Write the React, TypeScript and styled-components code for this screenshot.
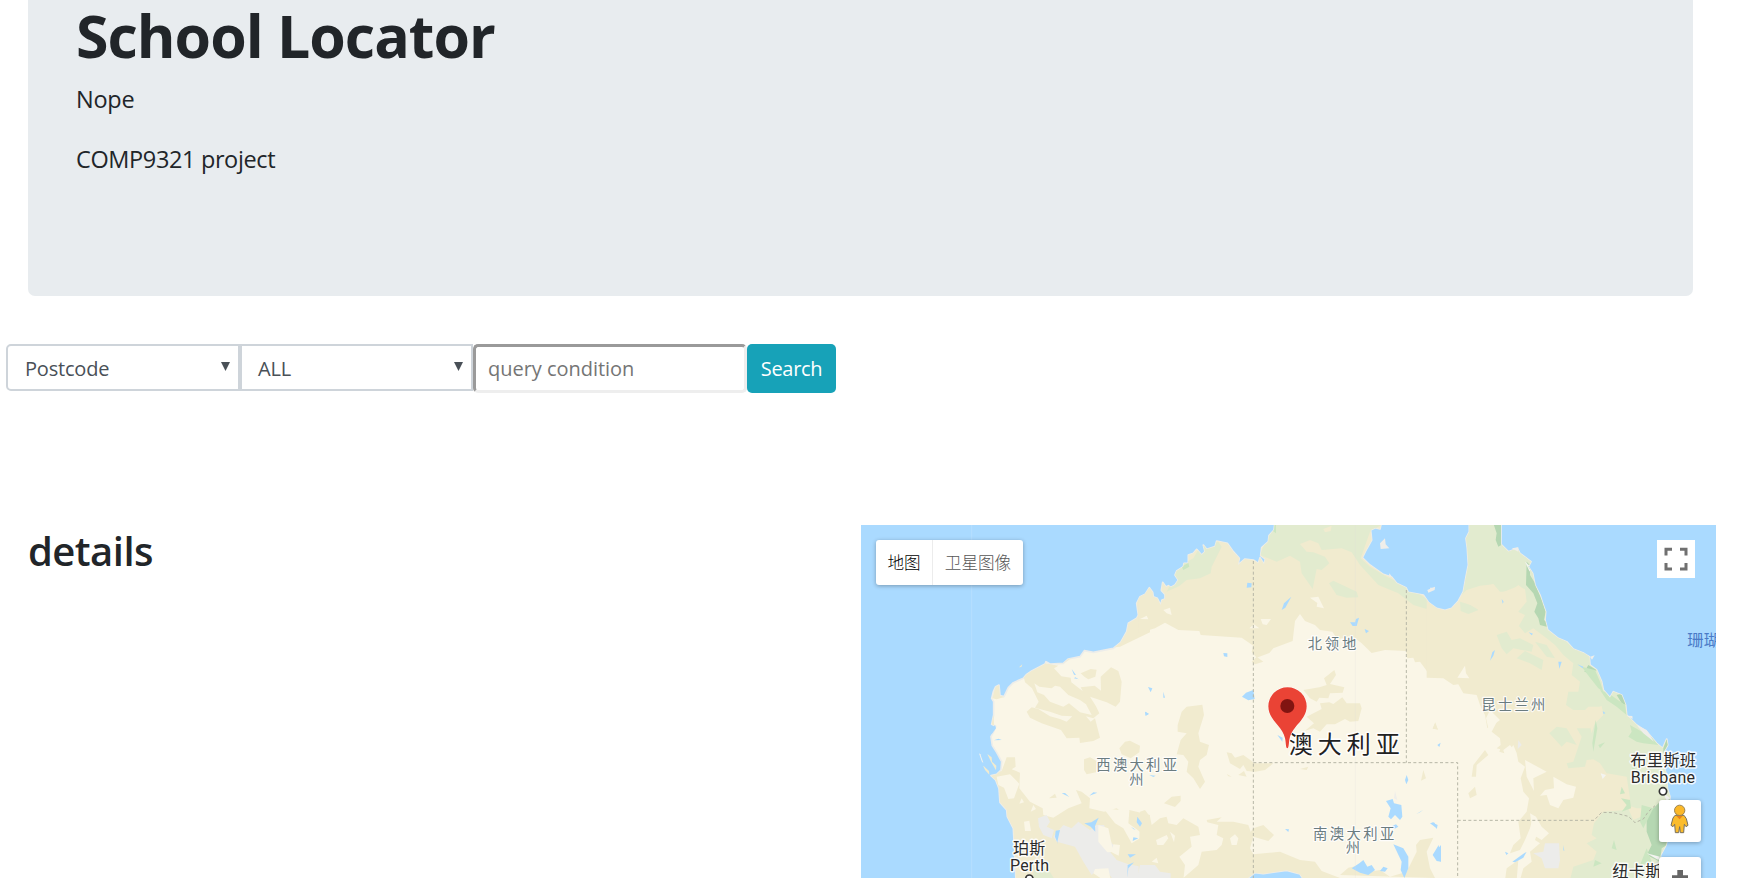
import React from 'react';
import styled, { createGlobalStyle } from 'styled-components';

const GlobalStyle = createGlobalStyle`
  * { box-sizing: border-box; }
  html, body { margin: 0; background: #fff; overflow: hidden; }
  body { font-family: 'Open Sans', 'Noto Sans', 'Noto Sans CJK SC', sans-serif; color: #212529; }
`;

const Page = styled.div`
  display: flex;
  flex-direction: column;
  height: 878px;
  overflow: hidden;
`;

const Jumbotron = styled.header`
  flex: none;
  height: 296px;
  margin: 0 47px 0 28px;
  padding: 1px 48px 0;
  background: #e8ecef;
  border-radius: 0 0 7px 7px;
`;

const Title = styled.h1`
  margin: 0;
  font-size: 59px;
  font-weight: 700;
  line-height: 68px;
  letter-spacing: -1px;
`;

const Lead = styled.p<{ $spacing: number }>`
  margin: 0 0 24px;
  font-size: 23.5px;
  line-height: 36px;
  letter-spacing: ${(p) => p.$spacing}px;
  &:first-of-type { margin-top: 12px; }
`;

const SearchBar = styled.form`
  display: flex;
  flex: none;
  align-items: flex-start;
  height: 181px;
  margin-top: 48px;
  padding-left: 6px;
`;

const SelectBox = styled.div<{ $first?: boolean }>`
  display: flex;
  align-items: center;
  justify-content: space-between;
  width: ${(p) => (p.$first ? 234 : 233)}px;
  height: 47px;
  padding: 1px 8px 0 ${(p) => (p.$first ? 17 : 16)}px;
  border: 2px solid #ced4da;
  border-radius: ${(p) => (p.$first ? '5px 0 0 5px' : '0')};
  color: #495057;
  font-size: 20px;
  letter-spacing: -0.2px;
`;

const Caret = styled.svg`
  width: 9px;
  height: 9px;
  margin-top: -3px;
  fill: #495057;
`;

const QueryInput = styled.input`
  width: 274px;
  height: 49px;
  padding: 0 12px;
  border: 3px solid;
  border-color: #9a9a9a #eee #eee #9a9a9a;
  border-radius: 5px;
  background: #fff;
  font: 20px 'Open Sans', sans-serif;
  letter-spacing: -0.03px;
  outline: none;
  &::placeholder { color: #757575; opacity: 1; }
`;

const SearchButton = styled.button`
  width: 89px;
  height: 49px;
  padding: 0;
  border: 0;
  border-radius: 5px;
  background: #17a2b8;
  color: #fff;
  font: 20px 'Open Sans', sans-serif;
  letter-spacing: -0.3px;
`;

const Content = styled.main`
  display: grid;
  grid-template-columns: 833px 855px;
  height: 353px;
  padding-left: 28px;
`;

const Details = styled.h2`
  margin: 0;
  font-size: 40px;
  font-weight: 600;
  line-height: 52px;
  letter-spacing: -0.55px;
`;

const MapPanel = styled.section`
  position: relative;
  height: 353px;
  overflow: hidden;
  background: #aadaff;
`;

const MapCanvas = styled.svg`
  display: block;
  width: 855px;
  height: 353px;
`;

const MapTypes = styled.div`
  position: absolute;
  left: 15px;
  top: 15px;
  display: flex;
  height: 45px;
  border-radius: 3px;
  background: #fff;
  box-shadow: 0 1px 4px rgba(0, 0, 0, 0.3);
`;

const MapType = styled.div<{ $active?: boolean }>`
  display: flex;
  align-items: center;
  justify-content: center;
  width: ${(p) => (p.$active ? 57 : 90)}px;
  padding-bottom: 2px;
  color: ${(p) => (p.$active ? '#000' : '#565656')};
  font: 300 16.6px 'Noto Sans CJK SC', sans-serif;
  border-right: ${(p) => (p.$active ? '1px solid #ececec' : '0')};
`;

const MapControl = styled.div<{ $top: number; $size: number; $left: number }>`
  position: absolute;
  left: ${(p) => p.$left}px;
  top: ${(p) => p.$top}px;
  width: ${(p) => p.$size}px;
  height: ${(p) => p.$size}px;
  background: #fff;
  border-radius: ${(p) => (p.$size > 40 ? 3 : 0)}px;
  box-shadow: ${(p) => (p.$size > 40 ? '0 1px 4px rgba(0,0,0,.3)' : 'none')};
  svg { display: block; width: 100%; height: 100%; }
`;

const LAND =
  'M498 1100L495 1030 490 940 472 905 470 885 450 862 447 820 437 795 423 782 440 778 453 765 455 740 440 712 427 692 423 665 430 652 437 634 425 628 431 600 431 560 425 550 430 530 437 515 447 510 450 542 462 545 475 518 490 503 520 490 530 478 545 468 585 447 588 440 600 447 640 445 655 432 690 425 703 407 730 412 790 400 812 382 830 350 835 325 860 310 865 300 860 265 870 245 885 238 898 218 908 232 910 245 922 250 932 270 936 255 945 252 945 238 934 226 938 202 948 216 955 212 963 217 975 210 985 195 975 180 980 168 1000 155 1002 145 1015 145 1015 120 1030 115 1040 103 1055 120 1065 110 1060 90 1070 103 1095 95 1100 78 1132 85 1150 110 1168 130 1164 150 1185 132 1210 135 1225 145 1230 128 1242 148 1246 132 1232 122 1235 98 1255 80 1257 62 1272 45 1275 20H1595L1590 42 1576 38 1562 45 1565 75 1550 102 1537 128 1560 150 1600 178 1625 186 1640 205 1668 218 1675 232 1720 240 1735 262 1760 280 1785 286 1805 280 1825 258 1840 230 1848 185 1855 150 1852 100 1848 70 1858 50 1858 20H1953L1953 88 1975 110 2002 100 2010 115 2043 140 2035 155 2048 175 2055 210 2070 240 2078 265 2087 290 2085 315 2093 345 2125 370 2150 380 2170 402 2202 415 2218 425 2220 450 2240 465 2255 500 2260 525 2280 548 2290 530 2315 540 2327 570 2330 600 2360 630 2390 650 2420 685 2438 700 2450 672 2453 690 2442 710 2440 750 2450 780 2452 820 2460 845 2458 870 2460 940 2448 990 2432 1020 2425 1100H1365L1350 1077 1310 1066 1240 1076 1215 1073 1180 1100Z';

const Label = (p: { x: number; y: number; w: number; size: number; color?: string; strong?: boolean; children: string }) => (
  <text
    x={p.x}
    y={p.y}
    textLength={p.w}
    fontSize={p.size}
    fill={p.color || '#6b7c80'}
    stroke={p.color === '#4a7bc8' ? 'none' : '#fff'}
    strokeOpacity={0.85}
    strokeWidth={p.strong ? 9 : 7}
    strokeLinejoin="round"
    paintOrder="stroke"
    fontFamily="Roboto, 'Noto Sans CJK SC', sans-serif"
    fontWeight={400}
  >
    {p.children}
  </text>
);

/* Drawn at three units per pixel; groups hold the west, centre and east thirds. */
const AustraliaMap = () => (
  <MapCanvas viewBox="33 30 2565 1059">
    <defs>
      <clipPath id="land"><path d={LAND} /></clipPath>
    </defs>
    <path d={LAND} fill="#faf6e7" stroke="#ededea" strokeWidth="5" strokeLinejoin="round" />
    <g clipPath="url(#land)">
      {/* west */}
      <g fill="#f1ebcf">
        <path d="M520 480L585 445 625 452 612 460 634 484 662 488 664 502 720 545 700 532 692 517 734 512 753 527 752 485 783 457 805 468 815 500 810 560 797 575 770 562 720 545 738 574 748 595 730 610 708 604 722 620 735 610 750 668 730 678 690 684 688 668 650 670 633 645 575 625 540 608 530 590 545 577 565 582 600 604 630 612 650 620 667 604 635 602 600 590 555 578 566 560 546 520 525 502Z" />
        <path fill="#faf6e7" d="M553 505L568 515 605 520 615 512 630 515 655 540 690 555 708 568 725 600 690 592 657 565 640 575 600 560 582 540 562 532Z" />
        <path d="M692 475L722 462 740 464 736 485 715 493 704 486Z M808 700L825 680 840 677 870 692 868 712 842 730 815 718Z M702 733L720 727 740 738 738 772 710 778 702 765Z M600 445L640 445 703 405 810 395 900 352 900 220 850 220 780 380Z" />
        <path d="M423 780L455 768 470 727 495 727 497 755 485 763 510 773 508 820 540 860 578 880 580 900 610 908 655 880 695 865 678 825 695 830 720 850 718 880 762 890 800 880 835 907 838 885 860 890 900 900V1095H490Z M425 590L431 603 432 630 415 660 410 630Z M427 550L437 512 450 510 450 540 463 546 440 553Z M597 850L615 836 620 848Z" />
        <path fill="#faf6e7" d="M440 785L480 778 508 806 492 850 475 852 462 818 445 810Z M515 850L522 862 508 866Z M550 870L558 882 542 890Z M522 920L538 917 543 948 525 948Z M760 880L838 888 835 925 870 950 890 940 900 985 870 970 845 985 820 940 795 925Z" />
        <path fill="#ececea" d="M564 910L590 900 600 920 590 935 612 945 605 970 580 960 567 935Z M610 965L640 930 665 940 685 920 720 945 740 930 762 930 770 950 785 985 805 1005 780 1010 800 1035 835 1048 900 1060V1095H790L770 1068 740 1065 725 1080 700 1040 675 995 620 980Z" />
        <path fill="#faf6e7" d="M745 930L775 940 790 1010 772 1012 745 980Z M790 988L810 990 806 1022 785 1012Z M735 1062L775 1060 782 1095H760L730 1075Z" />
        <path fill="#e2ebcf" d="M555 1055L590 1055 615 1095H545Z" />
      </g>
      {/* centre */}
      <g transform="translate(870 0)">
        <path fill="#f1ebcf" d="M-5 355L45 340 75 323 115 345 178 348 182 360 305 368 340 392 335 410 350 428 388 414 400 400 458 378 465 318 480 297 495 318 525 330 540 345 577 350 592 372 640 365 665 385 695 414 735 405 798 408 802 430 820 428 825 442 840 440 862 470 890 490V20H-5Z" />
        <g fill="#f1ebcf">
          <path d="M113 630L125 590 140 575 187 569 192 600 175 655 180 680 207 690 200 720 180 735 175 755 195 800 180 822 160 790 140 770 145 740 130 720 110 718 122 675 140 655 113 650Z M490 525L538 517 560 510 552 490 583 465 588 480 570 507 613 517 608 533 570 535 565 550 538 548 530 560 510 550Z M500 605L545 582 540 565 568 562 580 567 607 547 620 565 660 565 665 580 655 618 630 620 615 612 585 628 560 628 540 650 520 640 495 647 522 625Z M260 712L275 715 285 728 310 720 335 738 342 745 400 745 375 765 345 770 320 768 310 750 300 762 270 745Z M260 777L275 785 265 784Z M295 780L312 768 320 785Z M335 440L350 425 370 440 345 448Z M480 762L505 755 500 765Z M850 765L858 790 843 797Z M72 865L95 845 122 842 122 858 105 876Z M885 625L893 642 878 642Z" />
          <path d="M0 890L15 885 30 905 35 930 60 910 80 905 85 925 110 930 130 910 175 935 180 960 150 965 155 995 118 1025 135 1050 130 1095H-5Z M200 915L245 907 230 920 280 920 325 930 332 950 340 940 370 930 402 960 385 978 340 965 330 1000 340 1018 420 1010 480 1035 525 1040 545 1068 600 1089H130L175 1050 185 1010 230 1005 245 990 250 970 230 960 235 930 202 922Z M600 1080L625 1058 665 1050 690 1070 720 1065 750 1085 800 1070 830 1010 828 990 840 975 880 968 860 1010 870 1060 885 1089Z" />
          <path fill="#faf6e7" d="M48 975L80 960 85 970 70 990 52 990Z M90 950L105 962 102 982Z M270 970L285 958 295 970 290 990 275 990Z M35 1040L50 1028 55 1045Z" />
          <path fill="#ececea" d="M0 1050L45 1050 60 1070 92 1075V1095H-10Z" />
        </g>
        <path fill="#faf6e7" d="M70 285L90 278 95 300 80 295Z M0 312L20 302 25 313Z M510 248L535 245 552 280 530 275 532 264Z M362 312L393 312 380 330 368 328Z M328 340L342 328 358 340Z" />
        <path fill="#e2ebcf" d="M90 210L105 160 160 130 180 95 235 80 245 95 215 155 212 175 180 190 140 195 118 213 80 230Z M360 120L400 20H740L690 50 662 130 690 155 740 185 800 212 865 255 860 282 820 270 775 235 715 210 660 150 635 112 605 100 545 105 535 85 510 75 480 87 500 110 520 112 555 125 568 145 545 165 530 162 518 222 485 175 480 140 450 122 410 140Z M567 205L580 197 650 230 655 247 620 248 590 240Z" />
        <path fill="#cbe6c1" d="M400 30H408V55L395 45Z M125 155L145 143 148 155 130 165Z" />
        <path fill="#f1ebcf" d="M550 42L575 32 572 48 555 52Z" />
      </g>
      {/* east */}
      <g transform="translate(1740 0)">
        <path fill="#f1ebcf" d="M-10 488L40 490 70 510 85 508 100 535 140 540 150 570 165 600 172 640 188 625 205 612 185 650 210 670 212 690 200 700 220 705 240 690 260 715 265 740 285 755 272 790 280 830 297 850 290 890 265 920 272 970 250 990 240 1015 270 1005 285 975 300 940 305 920 325 945 315 975 330 985 300 1010 305 1040 280 1060 270 1095H750V20H-10Z" />
        <path fill="#faf6e7" d="M82 488L105 452 108 475 118 490Z M180 585L210 615 190 630 175 640 168 610Z M285 735L350 770 310 790 312 828 290 785Z M370 785L410 808 438 815 430 848 400 855 385 880 360 870 350 840 330 842 345 825 372 820Z M300 895L318 905 335 935 357 955 335 975 310 960Z M250 690L260 715 240 705Z" />
        <path fill="#f1ebcf" d="M115 835L135 815 140 840 120 850Z M130 750L165 705 175 720 140 750 138 785 125 785Z M8 640L16 622 24 645Z M215 690L223 715 208 710Z M230 1060L265 1035 260 1095H225Z" />
        <path fill="#ececea" d="M310 1015L340 1010 345 985 387 985 390 1035 385 1060 345 1060 335 1030Z M265 675L275 690 263 702Z" />
        <path fill="#e2ebcf" d="M80 255L110 225 150 212 190 208 210 235 235 225 260 215 285 222 290 260 265 290 280 305 260 325 285 355 310 340 350 370 375 390 400 420 430 445 425 480 450 500 445 530 415 530 408 570 430 585 465 585 475 575 515 575 520 600 480 640 440 640 455 665 430 740 410 745 415 760 465 755 470 735 490 733 510 745 530 775 590 785 600 850 590 885 520 890 492 925 485 960 500 970 470 985 500 1010 490 1035 430 1055 420 1095H750V20H100Z" />
        <path fill="#e2ebcf" d="M90 260L140 275 145 285 115 297 92 288Z M200 360L230 350 245 375 270 370 310 390 305 410 250 400 230 418 215 400Z M260 430L285 408 340 435 335 465 300 445Z M315 380L350 390 375 430 350 425Z M358 655L380 635 410 640 440 690 410 680 395 695Z" />
        <path fill="#f1ebcf" d="M105 260L125 225 190 207 210 230 240 230 265 210 285 225 280 260 240 260 240 280 285 300 260 345 210 345 185 320 155 290Z M470 590L515 573 520 600 497 615 485 655 478 625Z M535 785L555 780 562 795 550 804Z M590 870L620 880 650 880 645 900 610 915Z" />
        <g fill="#b5d7b2">
          <path d="M190 25H214V90L205 95 197 75 200 55Z M290 140L300 150 300 180 315 205 328 238 338 260 347 290 342 315 355 325 350 335 330 330 325 310 313 290 322 265 310 235 288 210Z M463 470L475 450 500 465 480 475Z M560 540L580 535 587 570 575 565Z M700 700L710 672 715 690 700 715Z M650 900L690 860 720 850V985L695 1000 690 1040 650 1020 665 990 650 950Z" />
        </g>
        <g fill="#cbe6c1">
          <path d="M455 455L495 465 510 500 520 530 505 520 480 488Z M510 525L535 535 585 570 590 600 560 575 530 555Z M600 630L670 670 685 690 640 685 620 680 595 665 605 650Z M497 615L502 640 490 710 487 685Z M573 850L600 855 603 880 575 890 590 870Z M505 690L525 682 510 700Z M625 720L635 750 605 765Z M552 975L560 1005 545 1000Z M495 1035L515 1045 490 1055Z M575 815L585 835 570 838Z M635 870L670 880 640 940 630 920Z M630 1050L650 1000 665 1040Z" />
        </g>
        <path fill="#f4f4f1" d="M285 140L302 155 299 170Z M512 775L528 780 518 792Z M650 1015L690 1025 685 1035Z M700 835L722 850 710 857Z" />
      </g>
    </g>

    {/* lakes, inlets and small islands */}
    <g fill="#aadaff">
      <path d="M435 630L438 640 425 658 418 650Z M432 676L445 671 455 675Z M665 462L678 480 672 479Z M672 490L686 493 676 487Z M635 835L645 834 658 846Z M718 842L730 832 742 833Z M703 925L724 922 746 908 735 933 736 950 722 935Z M617 947L630 945 622 980 624 988 615 965Z M843 935L858 945 850 942Z M862 905L876 925 870 935 860 922Z M850 967L865 970 848 978Z M833 1018L858 1018 840 1028Z M833 1050L852 1042 835 1060 832 1088Z M886 590L897 597 887 602Z" />
      <path d="M400 752L410 765 402 758Z" fill="#f1ebcf" />
      <path d="M387 715L391 718 400 743 396 741Z" fill="#f3f3ef" />
      <path d="M412 717L425 727 426 740 439 752 438 766 423 740Z M400 752L417 768 418 779 405 765Z M507 457L517 448 514 456Z" fill="#f1ebcf" />
      <g transform="translate(870 0)">
        <path d="M322 203L335 205 334 217 320 218Z M425 285L432 265 454 245 436 278Z M630 322L645 322 648 312 657 308 650 333 638 333Z M674 342L687 348 678 355Z M250 414L262 415 262 426 252 424Z M306 545L318 533 340 525 344 552 325 556Z M24 516L37 520 32 532Z M70 530L75 548 70 548Z M15 590L26 596 17 602Z M412 660L428 668 427 680Z M28 780L47 782 40 786Z M738 858L758 852 762 865 784 870 787 905 780 915 765 900 753 913 745 905 752 880Z M795 795L800 780 805 795 799 808Z M828 898L850 884 840 892Z M435 942L447 943 445 951Z M755 934L768 928 775 935 763 942Z M760 988L790 1000 805 1025 805 1060 793 1089 782 1065 785 1040Z M875 922L893 930 890 942Z M880 1018L903 990V1040Z M635 1060L658 1045 670 1035 682 1055 695 1050 705 1065 685 1080 660 1073Z M730 1055L743 1060 735 1070 720 1068Z" />
        <path d="M720 85L735 70 737 88 748 100 722 102Z M748 175L755 184 747 185Z M862 225L885 215 884 225 865 233Z M765 828L772 855 762 850Z" fill="#efeeea" />
      </g>
      <g transform="translate(1740 0)">
        <path d="M215 252L221 260 218 266Z M180 437L187 412 195 405 190 422Z M296 352L309 356 305 361Z M385 440L395 440 388 462Z M442 448L460 455 458 460Z M0 925L12 922 22 937 15 936Z M8 1020L26 990 33 1040 20 1038Z M247 1040L275 1020 290 1010 280 1028 255 1042Z M22 690L32 683 28 696Z M225 1010L235 1015 229 1020Z M400 990L403 1008 400 1006Z M518 588L526 594 521 598Z" />
        <path d="M0 218L15 218 2 228Z M245 100L265 97 265 110Z M480 425L494 421 486 434Z M590 602L607 603 608 612Z M620 630L650 645 672 680 640 655Z" fill="#efeeea" />
      </g>
    </g>

    <g fill="none" stroke="#b6b6a6" strokeWidth="3" strokeDasharray="9 7">
      <path d="M1210 138V1089M1210 743H1823V1089M1669 225V743M1823 916H2232L2255 892 2290 893 2335 904 2355 923 2380 912 2395 890 2415 872" />
    </g>
    <path d="M365 30V1089" stroke="#fff" strokeOpacity=".15" strokeWidth="3" />
    <path d="M1516 30V1089" stroke="#ddd" strokeOpacity=".22" strokeWidth="3" />

    <Label x={739} y={766} w={242} size={43}>西澳大利亚</Label>
    <Label x={838} y={811} w={43} size={43}>州</Label>
    <Label x={1373} y={401} w={146} size={43}>北领地</Label>
    <Label x={1389} y={971} w={244} size={43}>南澳大利亚</Label>
    <Label x={1487} y={1015} w={43} size={43}>州</Label>
    <Label x={1894} y={584} w={192} size={43}>昆士兰州</Label>
    <Label x={2512} y={394} w={98} size={49} color="#4a7bc8">珊瑚</Label>
    <Label x={489} y={1017} w={97} size={48} color="#2b2b2b" strong>珀斯</Label>
    <Label x={480} y={1067} w={117} size={48} color="#2b2b2b" strong>Perth</Label>
    <Label x={2341} y={754} w={197} size={49} color="#2b2b2b" strong>布里斯班</Label>
    <Label x={2342} y={803} w={193} size={48} color="#2b2b2b" strong>Brisbane</Label>
    <Label x={2287} y={1086} w={197} size={49} color="#2b2b2b" strong>纽卡斯尔</Label>
    <Label x={1316} y={714} w={333} size={72} color="#222" strong>澳大利亚</Label>
    <g fill="#fff" stroke="#333" strokeWidth="5">
      <circle cx="538" cy="1091" r="11" />
      <circle cx="2439" cy="829" r="11" />
    </g>

    <path d="M1312 700C1307 700 1308 682 1305 670C1297 631 1255 616 1255 574A57 57 0 0 1 1370 574C1370 616 1328 631 1319 670C1316 682 1317 700 1312 700Z" fill="#ea4335" stroke="#fff" strokeWidth="3" paintOrder="stroke" />
    <circle cx="1312" cy="573" r="21" fill="#811411" />
  </MapCanvas>
);

export default function App() {
  return (
    <>
      <GlobalStyle />
      <Page>
        <Jumbotron>
          <Title>School Locator</Title>
          <Lead $spacing={-0.25}>Nope</Lead>
          <Lead $spacing={-0.37}>COMP9321 project</Lead>
        </Jumbotron>
        <SearchBar>
          <SelectBox $first>
            Postcode
            <Caret viewBox="0 0 9 9"><path d="M0 0H9L4.5 9Z" /></Caret>
          </SelectBox>
          <SelectBox>
            ALL
            <Caret viewBox="0 0 9 9"><path d="M0 0H9L4.5 9Z" /></Caret>
          </SelectBox>
          <QueryInput placeholder="query condition" />
          <SearchButton type="button">Search</SearchButton>
        </SearchBar>
        <Content>
          <Details>details</Details>
          <MapPanel>
            <AustraliaMap />
            <MapTypes>
              <MapType $active>地图</MapType>
              <MapType>卫星图像</MapType>
            </MapTypes>
            <MapControl $left={796} $top={15} $size={38}>
              <svg viewBox="0 0 38 38" fill="none" stroke="#707070" strokeWidth="3">
                <path d="M9 15.5V9.2H15M23 9.2H29V15.5M29 23V29H23M15 29H9V23" />
              </svg>
            </MapControl>
            <MapControl $left={798} $top={275} $size={42}>
              <svg viewBox="0 0 126 126">
                <path d="M48 46H75L82 56 87 76 81 80 76 73 74 98H64L62 80 59 98H49L47 73 42 80 36 76 42 54Z" fill="#fbbc2c" stroke="#77705f" strokeWidth="3" strokeLinejoin="round" />
                <path d="M52 48H71L62 58Z" fill="#e8811a" />
                <circle cx="62" cy="31" r="15.5" fill="#fbb829" stroke="#9b8350" strokeWidth="3" />
              </svg>
            </MapControl>
            <MapControl $left={798} $top={332} $size={42}>
              <svg viewBox="0 0 42 42" fill="#666">
                <path d="M18.3 13H24V18.3H29V24H24V29H18.3V24H13V18.3H18.3Z" />
              </svg>
            </MapControl>
          </MapPanel>
        </Content>
      </Page>
    </>
  );
}
